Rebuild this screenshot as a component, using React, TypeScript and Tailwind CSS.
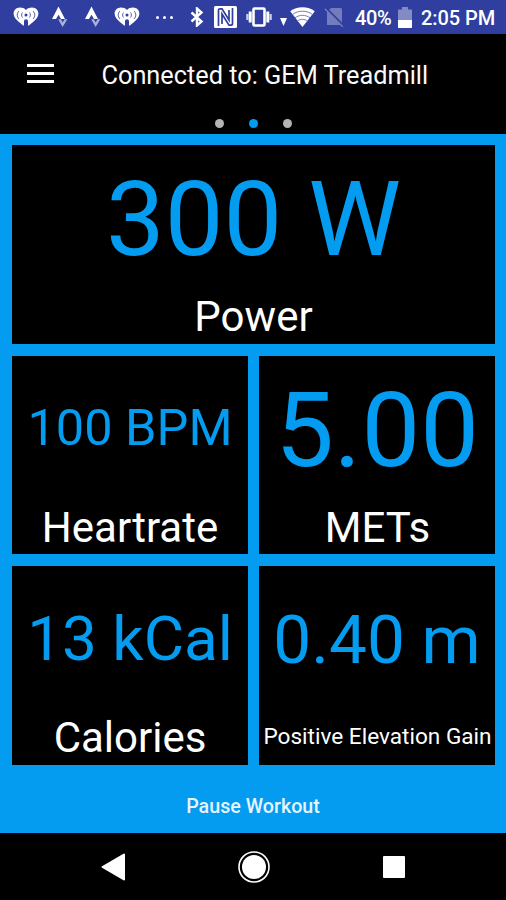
import type { ReactNode } from "react";

const metrics = [
  {
    label: "Power",
    value: "300 W",
    tile: "col-span-2",
    valueClass: "pt-[4px] text-[104.5px]",
    labelClass: "text-[42px] tracking-[0.1px] pt-[2px]",
  },
  {
    label: "Heartrate",
    value: "100 BPM",
    tile: "",
    valueClass: "pb-[2px] text-[50.5px]",
    labelClass: "text-[42px] pt-px",
  },
  {
    label: "METs",
    value: "5.00",
    tile: "",
    valueClass: "pt-[3px] text-[104.5px]",
    labelClass: "text-[42px] pt-px pl-px",
  },
  {
    label: "Calories",
    value: "13 kCal",
    tile: "",
    valueClass: "pb-[2px] text-[62px]",
    labelClass: "text-[42px] pt-px",
  },
  {
    label: "Positive Elevation Gain",
    value: "0.40 m",
    tile: "",
    valueClass: "text-[67.5px]",
    labelClass: "text-[22.6px] pl-px",
  },
];

function HeartRadioIcon() {
  return (
    <svg width="26" height="20" viewBox="0 0 26 20" fill="none">
      <path
        d="M13 3C11.400 1 9.200.4 7 .4 3.200.4.6 3.200.6 6.600c0 3.400 2.200 5.600 5 8.100l4.600 3.800c.4.3.8.1.8-.4v-3.800a2 2 0 0 1 4 0v3.800c0 .5.4.7.8.4l4.600-3.800c2.800-2.500 5-4.700 5-8.100C25.400 3.200 22.800.4 19 .4c-2.200 0-4.400.6-6 2.600z"
        fill="#fff"
      />
      <circle cx="13" cy="8" r="1.500" fill="#303f9f" />
      <path
        d="M9.500 5.500c-1.200 1.500-1.200 3.500 0 5M16.500 5.500c1.200 1.500 1.200 3.500 0 5M6 4c-2.400 2.500-2.400 5.500 0 8M20 4c2.400 2.500 2.400 5.500 0 8"
        stroke="#5965b2"
        strokeWidth="1"
      />
    </svg>
  );
}

function StravaIcon() {
  return (
    <svg width="16" height="22" viewBox="0 0 16 22" fill="none">
      <path d="M6.500.5 13 13H9L6.500 8.800 4 13H0z" fill="#fff" />
      <path d="M6.200 13.200h2.800l1.600 3.400 1.900-3.400h2.800l-4.700 7.800z" fill="#a9b0dc" />
    </svg>
  );
}

function BluetoothIcon() {
  return (
    <svg width="14" height="20" viewBox="0 0 14 20" fill="none">
      <path d="m1.500 5.500 10 9-4.500 4V1.500l4.500 4-10 9" stroke="#fff" strokeWidth="2.400" />
    </svg>
  );
}

function NfcIcon() {
  return (
    <svg width="23" height="22" viewBox="0 0 23 22" fill="none">
      <rect width="23" height="22" rx="1.500" fill="#fff" />
      <path
        d="M4.500 20V4.500c0-1.200.5-1.700 1.700-1.700H8l7 11.200V4M18.500 2v15.500c0 1.200-.5 1.700-1.700 1.700H15L8 8v10"
        stroke="#303f9f"
        strokeWidth="1.700"
      />
    </svg>
  );
}

function VibrateIcon() {
  return (
    <svg width="26" height="20" viewBox="0 0 26 20" fill="none">
      <rect x="7.500" y="1.500" width="11" height="17" rx="1" stroke="#fff" strokeWidth="2.600" />
      <path d="M4.200 4.500v11M21.800 4.500v11" stroke="#fff" strokeWidth="3" />
      <path d="M1.400 7v6M24.600 7v6" stroke="#c5cae9" strokeWidth="2.400" />
    </svg>
  );
}

function WifiIcon() {
  return (
    <svg width="25" height="20" viewBox="0 0 25 20" fill="none">
      <path d="M12.500 20 .2 4.300C3.600 1.600 7.800.2 12.500.2s8.900 1.400 12.300 4.100z" fill="#fff" />
      <path
        d="M2.500 7.500c5.700-4.400 14.300-4.400 20 0M5 10.800c4.500-3.300 10.500-3.300 15 0M7.500 14c3-2.200 7-2.200 10 0"
        stroke="#6f7abd"
        strokeWidth="1"
      />
    </svg>
  );
}

function NoSimIcon() {
  return (
    <svg width="20" height="20" viewBox="0 0 20 20" fill="none">
      <path d="M7 1h9.500c.8 0 1.500.6 1.500 1.500V18H3V5z" fill="#737dbd" />
      <path d="m2 1 17 17" stroke="#303f9f" strokeWidth="1.800" />
      <path d="m.8 1.800 18 18" stroke="#737dbd" strokeWidth="1.300" />
    </svg>
  );
}

function BatteryIcon() {
  return (
    <svg width="14" height="21" viewBox="0 0 14 21" fill="none">
      <path d="M4 0h6v2.500h3c.6 0 1 .4 1 1V13H0V3.500c0-.6.4-1 1-1h3z" fill="#838bc5" />
      <path d="M0 13h14v7c0 .6-.4 1-1 1H1c-.6 0-1-.4-1-1z" fill="#fff" />
    </svg>
  );
}

function StatusBar() {
  return (
    <div className="flex h-[34px] items-center bg-[#303f9f] pl-[12.500px] text-white">
      <HeartRadioIcon />
      <span className="ml-[13px]">
        <StravaIcon />
      </span>
      <span className="ml-[17.500px]">
        <StravaIcon />
      </span>
      <span className="ml-[13px]">
        <HeartRadioIcon />
      </span>
      <div className="ml-[16px] flex w-[17px] justify-between">
        <span className="size-[3px] rounded-full bg-white" />
        <span className="size-[3px] rounded-full bg-white" />
        <span className="size-[3px] rounded-full bg-white" />
      </div>
      <span className="ml-[16.500px]">
        <BluetoothIcon />
      </span>
      <span className="ml-[10.500px]">
        <NfcIcon />
      </span>
      <span className="ml-[9px]">
        <VibrateIcon />
      </span>
      <svg className="mt-[9px] ml-[8px]" width="7" height="8" viewBox="0 0 7 8">
        <path d="M0 0h7L3.500 8z" fill="#fff" />
      </svg>
      <span className="ml-[3px]">
        <WifiIcon />
      </span>
      <span className="ml-[9px]">
        <NoSimIcon />
      </span>
      <span className="mt-px ml-[11px] w-[38px] text-[20px] leading-none font-medium tracking-[-0.400px] whitespace-nowrap">
        40%
      </span>
      <span className="ml-[4.500px]">
        <BatteryIcon />
      </span>
      <span className="mt-px ml-[9.500px] text-[20px] leading-none font-medium tracking-[-0.050px] whitespace-nowrap">
        2:05 PM
      </span>
    </div>
  );
}

function Header({ children }: { children: ReactNode }) {
  return (
    <header className="h-[100px] bg-black">
      <div className="flex h-[80px] items-center pl-[26.500px]">
        <button aria-label="Menu" className="mb-[2px] flex w-[27px] flex-col gap-[5px]">
          <span className="h-[3px] bg-white" />
          <span className="h-[3px] bg-white" />
          <span className="h-[3px] bg-white" />
        </button>
        <h1 className="mt-[3px] ml-[48px] text-[25.300px] leading-none whitespace-nowrap text-[#fafafa]">
          {children}
        </h1>
      </div>
      <div className="flex justify-center gap-[25px] pt-[5px]">
        <span className="size-[9px] rounded-full bg-[#b4b4b4]" />
        <span className="size-[9px] rounded-full bg-[#039cf0]" />
        <span className="size-[9px] rounded-full bg-[#b4b4b4]" />
      </div>
    </header>
  );
}

export default function App() {
  return (
    <div className="flex h-[900px] w-[506px] flex-col overflow-hidden bg-[#039cf0] font-['Roboto',sans-serif]">
      <StatusBar />
      <Header>Connected to: GEM Treadmill</Header>

      <main className="grid grid-cols-[236px_236px] grid-rows-[199px_198px_199px] gap-x-[11px] gap-y-3 pt-[11px] pl-3">
        {metrics.map((m) => (
          <section
            key={m.label}
            className={`flex flex-col items-center bg-black whitespace-nowrap ${m.tile}`}
          >
            <div className={`flex h-[147px] items-center leading-none text-[#039cf0] ${m.valueClass}`}>
              {m.value}
            </div>
            <div className={`flex h-[48px] items-center leading-none text-white ${m.labelClass}`}>
              {m.label}
            </div>
          </section>
        ))}
      </main>

      <button className="flex flex-1 items-center justify-center pt-[15px] text-[19.700px] font-medium text-[#e6f5fe]">
        Pause Workout
      </button>

      {/* Android navigation keys */}
      <nav className="flex h-[67px] items-center bg-black pl-[101px]">
        <svg width="25" height="28" viewBox="0 0 25 28">
          <path d="M23 1.500v25L1.500 14z" fill="#fff" stroke="#fff" strokeWidth="2" strokeLinejoin="round" />
        </svg>
        <svg className="ml-[111.500px]" width="32" height="32" viewBox="0 0 32 32">
          <circle cx="16" cy="16" r="15" fill="none" stroke="#fff" strokeWidth="1.600" />
          <circle cx="16" cy="16" r="12" fill="#fff" />
        </svg>
        <span className="ml-[113.500px] size-[22px] rounded-[1px] bg-white" />
      </nav>
    </div>
  );
}
